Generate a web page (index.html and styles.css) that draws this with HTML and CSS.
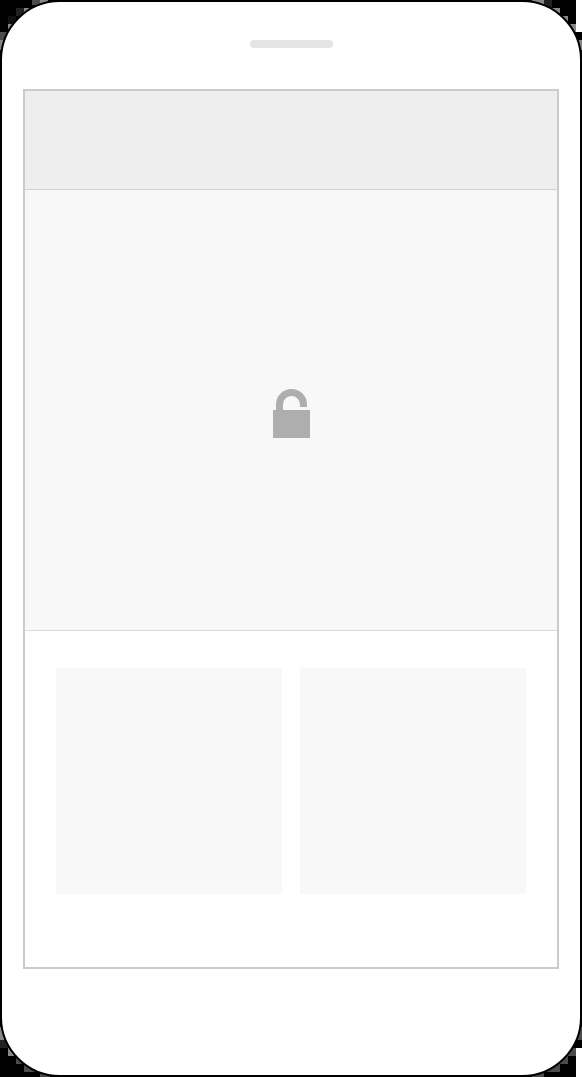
FILE: index.html
```html
<!DOCTYPE html>
<html lang="en">
<head>
<meta charset="utf-8">
<title>Phone wireframe</title>
<link rel="stylesheet" href="styles.css">
</head>
<body>
<svg class="backdrop" width="582" height="1077" viewBox="0 0 582 1077" shape-rendering="crispEdges" aria-hidden="true">
  <path fill="#fff" d="M576 0h6v32h-6zM576 1048h6v29h-6z"/>
  <path fill="#222" d="M16 8h8v8h-8zM544 0h8v8h-8zM0 1040h8v8h-8z"/>
  <path fill="#111" d="M8 16h8v8h-8z"/>
  <path fill="#4c4c4c" d="M32 0h8v5h-8zM0 32h8v8h-8zM16 1056h8v8h-8zM24 1064h11v8h-11zM40 1072h10v5h-10zM576 1027h6v13h-6zM568 1048h8v8h-8zM560 1056h8v8h-8zM544 1064h16v8h-16zM532 1072h12v5h-12z"/>
  <path fill="#888" d="M40 0h8v4h-8zM24 8h5v7h-5zM8 24h4v5h-4zM0 40h3v10h-3zM532 0h12v5h-12zM552 8h8v5h-8zM563 16h5v5h-5zM568 24h8v8h-8zM576 40h6v10h-6zM0 1027h4v13h-4zM8 1048h6v8h-6z"/>
</svg>
<main class="phone">
  <div class="speaker"></div>
  <section class="screen">
    <header class="topbar"></header>
    <div class="hero">
      <svg class="lock" width="37" height="49" viewBox="0 0 37 49" aria-hidden="true">
        <path d="M0 21H3V15.500A15.500 15.500 0 0 1 34 15.500V18H27V15.500A8.500 8.500 0 0 0 10 15.500V21H37V49H0Z" fill="#aeaeae"/>
      </svg>
    </div>
    <div class="tiles">
      <div class="tile"></div>
      <div class="tile"></div>
    </div>
  </section>
</main>
</body>
</html>
```
FILE: styles.css
```css
body {
  margin: 0;
  background: #000;
}
.backdrop {
  position: absolute;
  top: 0;
  left: 0;
  z-index: -1;
}
.phone {
  box-sizing: border-box;
  width: 582px;
  height: 1077px;
  padding: 38px 21px 0;
  border: 2px solid #000;
  border-radius: 60px;
  background: #fff;
  display: flex;
  flex-direction: column;
  align-items: center;
}
.speaker {
  width: 83px;
  height: 8px;
  margin-bottom: 41px;
  border-radius: 4px;
  background: #e4e4e4;
}
.screen {
  box-sizing: border-box;
  width: 536px;
  height: 880px;
  border: 2px solid #cbcbcb;
}
.topbar {
  height: 98px;
  background: #eee;
  border-bottom: 1px solid #d2d2d2;
}
.hero {
  height: 440px;
  background: #f8f8f8;
  border-bottom: 1px solid #dadada;
  display: flex;
  justify-content: center;
}
.lock {
  margin: 199px 0 0 1px;
}
.tiles {
  display: flex;
  gap: 18px;
  padding: 37px 31px;
}
.tile {
  width: 226px;
  height: 226px;
  background: #f8f8f8;
}
```
